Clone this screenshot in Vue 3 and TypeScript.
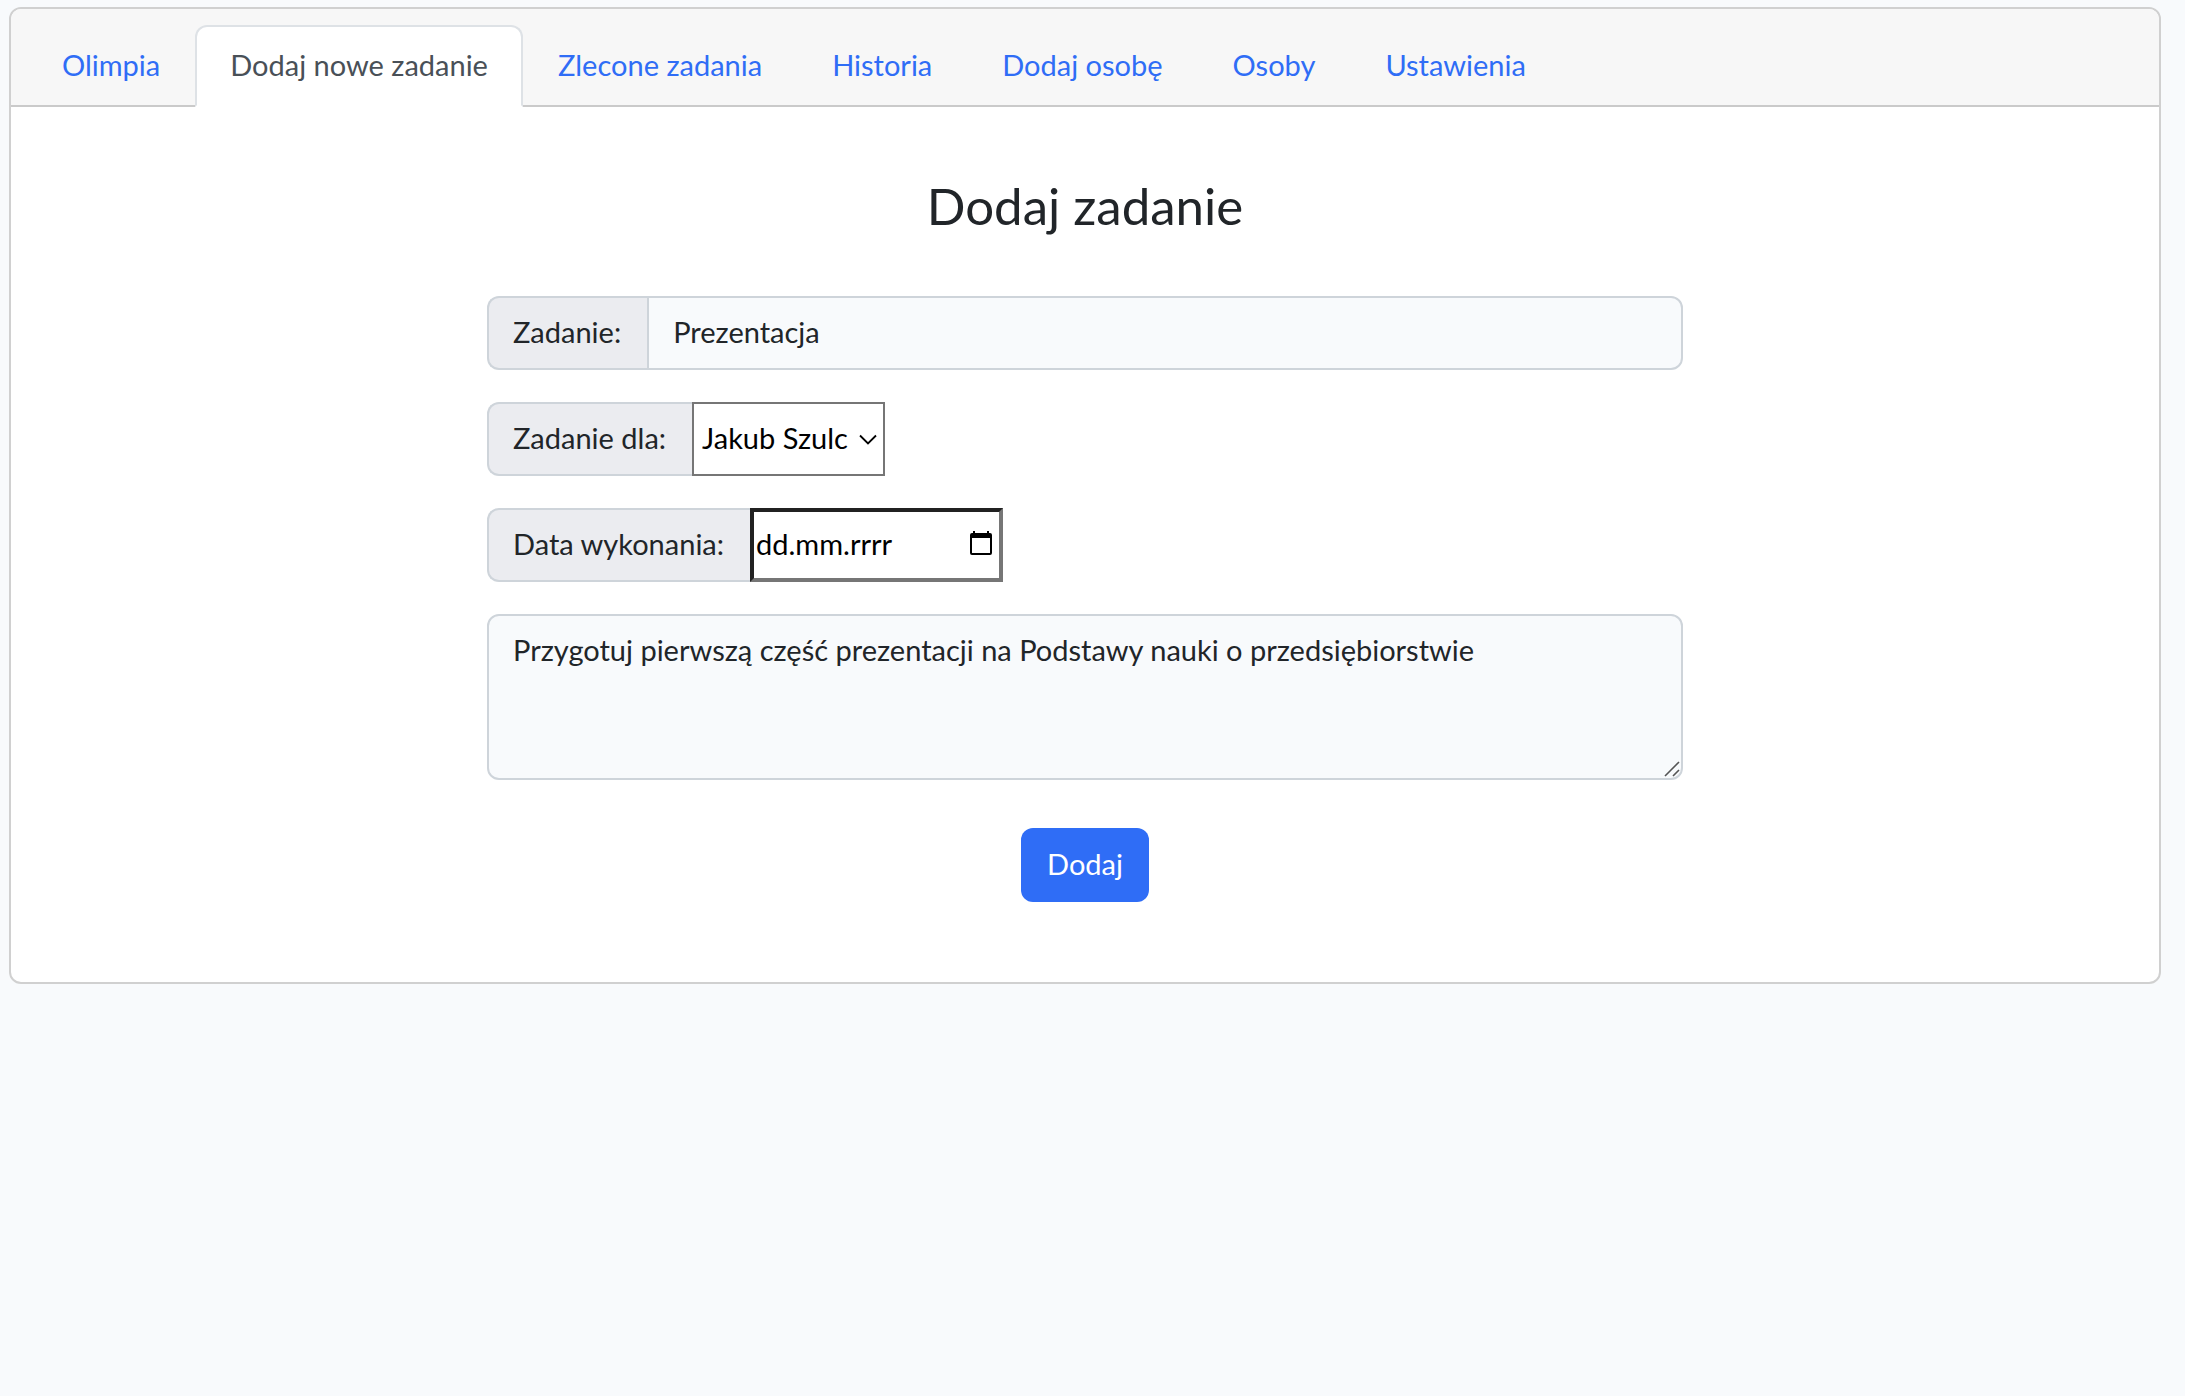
<script setup lang="ts">
import { ref } from 'vue'

interface Tab {
  label: string
  href: string
}

const tabs: Tab[] = [
  { label: 'Olimpia', href: '#olimpia' },
  { label: 'Dodaj nowe zadanie', href: '#dodaj-zadanie' },
  { label: 'Zlecone zadania', href: '#zlecone' },
  { label: 'Historia', href: '#historia' },
  { label: 'Dodaj osobę', href: '#dodaj-osobe' },
  { label: 'Osoby', href: '#osoby' },
  { label: 'Ustawienia', href: '#ustawienia' },
]

const activeTab = ref(1)
const people: string[] = ['Jakub Szulc']

const title = ref('Prezentacja')
const person = ref(people[0])
const dueDate = ref('')
const description = ref('Przygotuj pierwszą część prezentacji na Podstawy nauki o przedsiębiorstwie')
</script>

<template>
  <main class="page">
    <section class="card">
      <nav class="card-header">
        <ul class="tabs">
          <li v-for="(tab, i) in tabs" :key="tab.href">
            <a
              class="tab"
              :class="{ active: i === activeTab }"
              :href="tab.href"
              @click.prevent="activeTab = i"
            >{{ tab.label }}</a>
          </li>
        </ul>
      </nav>

      <div class="card-body">
        <h1 class="heading">Dodaj zadanie</h1>
        <form class="form" @submit.prevent>
          <div class="group">
            <label class="addon" for="title">Zadanie:</label>
            <input id="title" v-model="title" class="control" type="text" />
          </div>

          <div class="group">
            <label class="addon" for="person">Zadanie dla:</label>
            <div class="select-wrap">
              <select id="person" v-model="person" class="select">
                <option v-for="p in people" :key="p" :value="p">{{ p }}</option>
              </select>
              <svg class="chevron" width="18" height="12" viewBox="0 0 18 12" aria-hidden="true">
                <path d="M1 1.5 9 9.5 17 1.5" fill="none" stroke="#000" stroke-width="1.8" />
              </svg>
            </div>
          </div>

          <div class="group">
            <label class="addon" for="due">Data wykonania:</label>
            <div class="date-wrap">
              <input id="due" v-model="dueDate" class="date" type="text" placeholder="dd.mm.rrrr" />
              <svg class="calendar" width="22" height="24" viewBox="0 0 22 24" aria-hidden="true">
                <path
                  fill="#000"
                  fill-rule="evenodd"
                  d="M3 0h2v2h12V0h2v2h1a2 2 0 0 1 2 2v18a2 2 0 0 1-2 2H2a2 2 0 0 1-2-2V4a2 2 0 0 1 2-2h1zM2 7v15h18V7z"
                />
              </svg>
            </div>
          </div>

          <div class="area-wrap">
            <textarea v-model="description" class="area" aria-label="Opis zadania"></textarea>
            <svg class="grip" width="16" height="16" viewBox="0 0 16 16" aria-hidden="true">
              <path d="M1 15 15 1M9 15l6-6" fill="none" stroke="#555" stroke-width="1.6" />
            </svg>
          </div>

          <button class="submit" type="submit">Dodaj</button>
        </form>
      </div>
    </section>
  </main>
</template>

<style>
body {
  margin: 0;
  background: #f8fafc;
}
</style>

<style scoped>
.page,
.page * {
  box-sizing: border-box;
}

.page {
  padding: 7px 24px 7px 9px;
  font-family: Lato, 'Noto Sans', sans-serif;
  font-size: 29px;
  line-height: 46px;
  color: #212529;
}

.card {
  background: #fff;
  border: 2px solid #d0d0d0;
  border-radius: 12px;
}

.card-header {
  padding: 16px 16px 0;
  background: #f7f7f7;
  border-bottom: 2px solid #cacaca;
  border-radius: 10px 10px 0 0;
}

.tabs {
  display: flex;
  flex-wrap: wrap;
  margin: 0 0 -2px;
  padding: 0;
  list-style: none;
}

.tab {
  display: block;
  padding: 15px 33px 17px;
  border: 2px solid transparent;
  border-radius: 12px 12px 0 0;
  color: #2f6df6;
  text-decoration: none;
}

.tab.active {
  color: #495057;
  background: #fff;
  border-color: #dee2e6 #dee2e6 #fff;
}

.card-body {
  padding: 69px 32px 80px;
}

.heading {
  margin: 0 0 60px;
  font-size: 51px;
  line-height: 60px;
  font-weight: 400;
  text-align: center;
}

.form {
  display: flex;
  flex-direction: column;
  gap: 32px;
  max-width: 1196px;
  margin: 0 auto;
}

.group {
  display: flex;
  height: 74px;
}

.addon {
  display: flex;
  align-items: center;
  padding: 0 26px 2px 24px;
  border: 2px solid #ced4da;
  border-right: 0;
  border-radius: 12px 0 0 12px;
  background: #ebecf0;
  white-space: nowrap;
}

.control,
.area {
  font: inherit;
  color: inherit;
  background: #f8fafc;
  border: 2px solid #ced4da;
  outline: none;
}

.control {
  flex: 1;
  min-width: 0;
  padding: 0 24px 2px;
  border-radius: 0 12px 12px 0;
}

.select-wrap,
.date-wrap,
.area-wrap {
  position: relative;
  display: flex;
}

.select {
  width: 193px;
  padding: 0 8px 2px;
  font: inherit;
  color: #000;
  background: #fff;
  border: 2px solid #767676;
  border-radius: 0;
  appearance: none;
}

.chevron {
  position: absolute;
  right: 8px;
  top: 32px;
  pointer-events: none;
}

.date {
  width: 253px;
  padding: 0 2px 2px;
  font: inherit;
  color: #000;
  background: #fff;
  border: 4px solid;
  border-color: #212121 #767676 #767676 #212121;
  border-radius: 0;
  outline: none;
}

.date::placeholder {
  color: #000;
  opacity: 1;
}

.calendar {
  position: absolute;
  right: 11px;
  top: 23px;
}

.area {
  width: 100%;
  height: 166px;
  padding: 11px 24px;
  border-radius: 12px;
  resize: none;
}

.grip {
  position: absolute;
  right: 3px;
  bottom: 3px;
  pointer-events: none;
}

.submit {
  align-self: center;
  height: 74px;
  margin-top: 16px;
  padding: 0 26px 2px;
  font: inherit;
  color: #fff;
  background: #2f6df6;
  border: 0;
  border-radius: 12px;
  cursor: pointer;
}
</style>
